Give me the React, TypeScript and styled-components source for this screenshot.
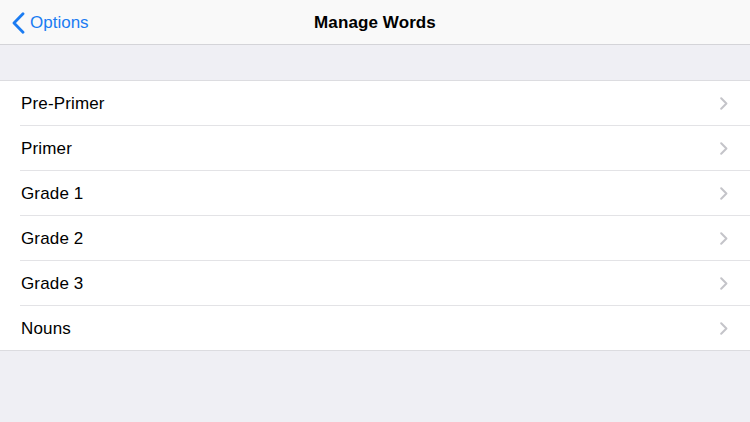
import React from 'react'
import styled, { createGlobalStyle } from 'styled-components'

const GlobalStyle = createGlobalStyle`
    html, body {
        margin: 0;
        padding: 0;
        background: #efeff4;
        font-family: "Liberation Sans", Arial, sans-serif;
        -webkit-font-smoothing: antialiased;
    }
`

const Screen = styled.div`
    width: 750px;
    height: 422px;
    background: #efeff4;
    overflow: hidden;
`

const NavBar = styled.div`
    height: 45px;
    background: #f9f9f9;
    border-bottom: 1px solid #d4d4d8;
    display: grid;
    grid-template-columns: 1fr auto 1fr;
    align-items: center;
    padding-top: 2px;
    box-sizing: border-box;
`

const BackButton = styled.div`
    display: flex;
    align-items: center;
    gap: 5px;
    padding-left: 12px;
    color: #1b7cf2;
    font-size: 17px;
    cursor: pointer;
`

const Title = styled.div`
    font-size: 17px;
    font-weight: bold;
    color: #000;
    letter-spacing: 0.1px;
`

const Spacer = styled.div`
    height: 35px;
`

const List = styled.div`
    background: #fff;
    border-top: 1px solid #dcdce0;
    border-bottom: 1px solid #dcdce0;
`

const Row = styled.div<{ $last?: boolean }>`
    height: ${p => (p.$last ? '44px' : '45px')};
    margin-left: 20px;
    padding-right: 22px;
    display: flex;
    align-items: center;
    justify-content: space-between;
    box-sizing: border-box;
    border-bottom: ${p => (p.$last ? 'none' : '1px solid #e3e3e6')};
`

const Label = styled.span`
    font-size: 17px;
    color: #000;
    padding-left: 1px;
    padding-top: 2px;
    letter-spacing: 0.15px;
`

const Chevron = () => (
    <svg width="8" height="13" viewBox="0 0 8 13" fill="none">
        <path d="M1.2 1.2 L6.4 6.5 L1.2 11.8" stroke="#c4c4c9" strokeWidth="2" strokeLinecap="round" strokeLinejoin="round" />
    </svg>
)

const BackChevron = () => (
    <svg width="13" height="22" viewBox="0 0 13 22" fill="none">
        <path d="M11 1.8 L2 11 L11 20.2" stroke="#1b7cf2" strokeWidth="2.8" strokeLinecap="round" strokeLinejoin="round" />
    </svg>
)

const items = ['Pre-Primer', 'Primer', 'Grade 1', 'Grade 2', 'Grade 3', 'Nouns']

const App = () => {
    return (
        <Screen>
            <GlobalStyle />
            <NavBar>
                <BackButton>
                    <BackChevron />
                    <span>Options</span>
                </BackButton>
                <Title>Manage Words</Title>
                <div />
            </NavBar>
            <Spacer />
            <List>
                {items.map((item, i) => (
                    <Row key={item} $last={i === items.length - 1}>
                        <Label>{item}</Label>
                        <Chevron />
                    </Row>
                ))}
            </List>
        </Screen>
    )
}

export default App
